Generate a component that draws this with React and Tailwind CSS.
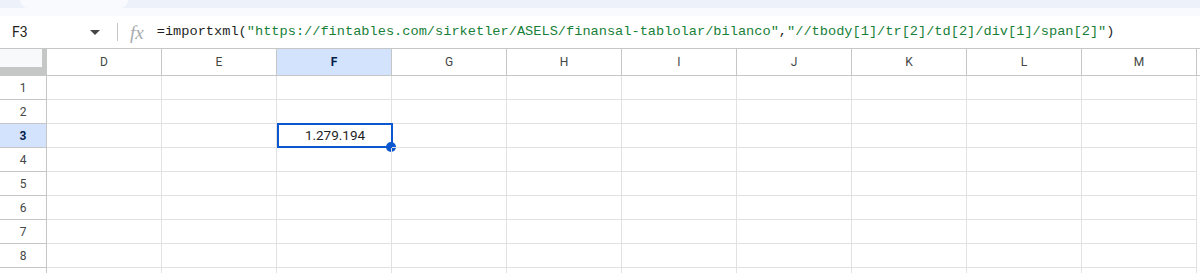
import React from "react";

const cols = ["D", "E", "F", "G", "H", "I", "J", "K", "L", "M"];
const rows = [1, 2, 3, 4, 5, 6, 7, 8, 9];

function FormulaBar() {
  return (
    <div className="flex h-[33px] items-center border-b border-[#c4c7c5] bg-white">
      <div className="flex w-[117px] items-center pl-[12px] pr-[16px]">
        <span className="flex-1 text-[14px] text-[#1f1f1f]">F3</span>
        <svg width="10" height="5" viewBox="0 0 10 5" className="mr-[1px]">
          <path d="M0 0h10L5 5z" fill="#444746" />
        </svg>
      </div>
      <div className="h-[18px] w-px bg-[#c4c7c5]" />
      <span className="ml-[12px] mr-[13px] font-['Liberation_Serif',serif] text-[19px] italic leading-none text-[#a8abae]">
        fx
      </span>
      <div className="whitespace-nowrap font-['Liberation_Mono',monospace] text-[13.65px] text-[#1f1f1f]">
        =importxml(
        <span className="text-[#188038]">"https://fintables.com/sirketler/ASELS/finansal-tablolar/bilanco"</span>
        ,
        <span className="text-[#188038]">"//tbody[1]/tr[2]/td[2]/div[1]/span[2]"</span>)
      </div>
    </div>
  );
}

function HeaderRow() {
  return (
    <div className="flex h-[27px] border-b border-[#c4c7c5]">
      <div className="w-[47px] shrink-0 bg-[#f8f9fa] border-r-[5px] border-b-[8px] border-[#c4c7c5]" />
      {cols.map((c) => (
        <div
          key={c}
          className={`flex w-[115px] shrink-0 items-center justify-center border-r border-[#c4c7c5] text-[12px] ${
            c === "F" ? "bg-[#d3e3fd] font-bold text-[#041e49]" : "bg-white text-[#444746]"
          }`}
        >
          {c}
        </div>
      ))}
    </div>
  );
}

function Row({ n }) {
  const sel = n === 3;
  return (
    <div className="flex h-[24px]">
      <div
        className={`flex w-[47px] shrink-0 items-center justify-center border-b border-r border-[#c4c7c5] text-[12px] ${
          sel ? "bg-[#d3e3fd] font-bold text-[#041e49]" : "bg-white text-[#444746]"
        }`}
      >
        {n < 9 ? n : ""}
      </div>
      {cols.map((c) => (
        <div key={c} className="relative w-[115px] shrink-0 border-b border-r border-[#e1e1e1]">
          {sel && c === "F" && (
            <>
              <div className="absolute left-0 top-[-1px] flex h-[25px] w-[116px] items-center justify-center border-2 border-[#0b57d0] text-[13.5px] text-[#1f1f1f]">
                1.279.194
              </div>
              <div className="absolute right-[-5px] bottom-[-5px] h-[10px] w-[10px] rounded-full bg-[#0b57d0]" />
            </>
          )}
        </div>
      ))}
    </div>
  );
}

export default function App() {
  return (
    <div className="h-[273px] w-[1200px] overflow-hidden bg-white font-['Roboto','Liberation_Sans',sans-serif]">
      <div className="relative h-[8px] bg-[#edf2fa]">
        <div className="absolute left-[20px] top-0 h-[8px] w-[108px] rounded-b-[8px] bg-[#f8fafd]" />
      </div>
      <div className="h-[8px] bg-[#f8fafd]" />
      <FormulaBar />
      <HeaderRow />
      {rows.map((n) => (
        <Row key={n} n={n} />
      ))}
    </div>
  );
}
